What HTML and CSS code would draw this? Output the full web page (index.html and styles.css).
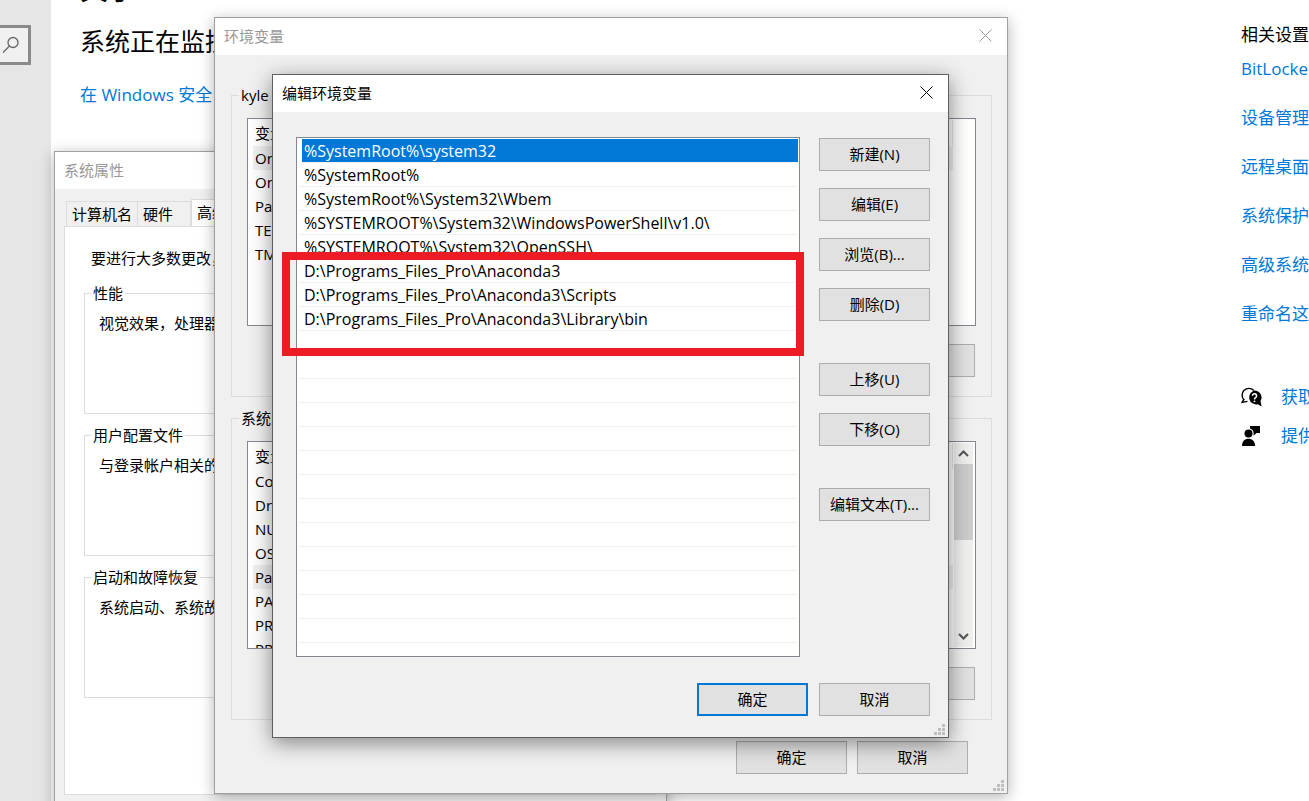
FILE: index.html
```html
<!DOCTYPE html>
<html lang="zh-CN">
<head>
    <meta charset="UTF-8">
    <meta name="viewport" content="width=device-width, initial-scale=1.0">
    <title>关于</title>
    <link rel="stylesheet" href="styles.css">
</head>
<body>
    <div class="desktop">
        <div class="settings">
            <div class="sidebar">
                <label class="search">
                    <input class="search-input" type="text" aria-label="查找设置">
                    <svg class="search-icon" width="18" height="18" viewBox="0 0 18 18" fill="none" stroke="#666" stroke-width="1.3">
                        <circle cx="11" cy="6.5" r="5"/>
                        <path d="M7.5 10 L1 16.5"/>
                    </svg>
                </label>
            </div>
            <main class="about">
                <h1 class="about-title">关于</h1>
                <h2 class="about-status">系统正在监控</h2>
                <a class="link" href="#">在 Windows 安全</a>
            </main>
            <aside class="related">
                <h3 class="related-title">相关设置</h3>
                <nav class="related-links">
                    <a class="link" href="#">BitLocker</a>
                    <a class="link" href="#">设备管理</a>
                    <a class="link" href="#">远程桌面</a>
                    <a class="link" href="#">系统保护</a>
                    <a class="link" href="#">高级系统</a>
                    <a class="link" href="#">重命名这</a>
                </nav>
                <div class="help">
                    <div class="help-row">
                        <svg width="22" height="20" viewBox="0 0 22 20">
                            <path d="M3 13 A6.3 6.3 0 1 1 12.8 3.5" fill="none" stroke="#000" stroke-width="1.4"/>
                            <path d="M3.2 12 L1 15.4 L6.5 14.4" fill="none" stroke="#000" stroke-width="1.4"/>
                            <path d="M13.5 3.5 a7 7 0 0 1 6 10.6 L20.6 19.4 L16.8 17.2 A7 7 0 1 1 13.5 3.5 Z" fill="#000"/>
                            <path d="M11.4 8.7 a2.1 2.1 0 1 1 3.2 1.9 c-.8.5-1.1.8-1.1 1.8" fill="none" stroke="#fff" stroke-width="1.5"/>
                            <rect x="12.7" y="13.6" width="1.6" height="1.6" fill="#fff"/>
                        </svg>
                        <a class="link" href="#">获取</a>
                    </div>
                    <div class="help-row">
                        <svg width="22" height="20" viewBox="0 0 22 20">
                            <circle cx="7.5" cy="7.5" r="4"/>
                            <path d="M1 20 C1 15 4 12.8 7.5 12.8 S14 15 14 20 Z"/>
                            <path d="M9 0 H19 V7 H15.5 L12.6 9.8 V7 Q12.2 3.6 9 2.6 Z"/>
                        </svg>
                        <a class="link" href="#">提供</a>
                    </div>
                </div>
            </aside>
        </div>

        <section class="window window-system">
            <header class="window-head">
                <span class="window-title">系统属性</span>
            </header>
            <div class="system-body">
                <div class="tabs">
                    <button class="tab">计算机名</button>
                    <button class="tab tab-hardware">硬件</button>
                    <button class="tab tab-active">高级</button>
                </div>
                <div class="pane">
                    <p class="pane-note">要进行大多数更改，</p>
                    <fieldset class="option">
                        <legend>性能</legend>
                        视觉效果，处理器
                    </fieldset>
                    <fieldset class="option">
                        <legend>用户配置文件</legend>
                        与登录帐户相关的
                    </fieldset>
                    <fieldset class="option">
                        <legend>启动和故障恢复</legend>
                        系统启动、系统故
                    </fieldset>
                </div>
            </div>
        </section>

        <section class="window window-env">
            <header class="window-head">
                <span class="window-title">环境变量</span>
                <button class="close" aria-label="关闭">
                    <svg width="13" height="13" viewBox="0 0 13 13" stroke="currentColor"><path d="M.5 .5 L12.5 12.5 M12.5 .5 L.5 12.5"/></svg>
                </button>
            </header>
            <div class="env-body">
                <fieldset class="vars">
                    <legend>kyle 的</legend>
                    <div class="vars-box">
                        <table class="vars-table">
                            <tr><th>变量</th><th></th></tr>
                            <tr class="vars-current"><td>OneDrive</td><td></td></tr>
                            <tr><td>OneDrive</td><td></td></tr>
                            <tr><td>Path</td><td></td></tr>
                            <tr><td>TEMP</td><td></td></tr>
                            <tr><td>TMP</td><td></td></tr>
                        </table>
                    </div>
                    <div class="vars-actions">
                        <button class="btn" aria-label="删除"></button>
                    </div>
                </fieldset>
                <fieldset class="vars">
                    <legend>系统变量</legend>
                    <div class="vars-box">
                        <table class="vars-table">
                            <tr><th>变量</th><th></th></tr>
                            <tr><td>ComSpec</td><td></td></tr>
                            <tr><td>DriverData</td><td></td></tr>
                            <tr><td>NUMBER</td><td></td></tr>
                            <tr><td>OS</td><td></td></tr>
                            <tr class="vars-current"><td>Path</td><td></td></tr>
                            <tr><td>PATHEXT</td><td></td></tr>
                            <tr><td>PROCESSOR</td><td></td></tr>
                            <tr><td>PROCESSOR</td><td></td></tr>
                        </table>
                        <div class="scrollbar">
                            <svg class="scroll-arrow" width="19" height="21" viewBox="0 0 19 21" fill="none" stroke="#555" stroke-width="2"><path d="M5 13 L9.5 8.5 L14 13"/></svg>
                            <div class="scroll-thumb"></div>
                            <svg class="scroll-arrow" width="19" height="21" viewBox="0 0 19 21" fill="none" stroke="#555" stroke-width="2"><path d="M5 8 L9.5 12.5 L14 8"/></svg>
                        </div>
                    </div>
                    <div class="vars-actions">
                        <button class="btn" aria-label="删除"></button>
                    </div>
                </fieldset>
                <div class="env-footer">
                    <button class="btn">确定</button>
                    <button class="btn">取消</button>
                </div>
            </div>
            <svg class="grip" width="11" height="11" viewBox="0 0 11 11" fill="#bfbfbf"><path d="M8 0h3v3h-3zM4 4h3v3h-3zM8 4h3v3h-3zM0 8h3v3h-3zM4 8h3v3h-3zM8 8h3v3h-3z"/></svg>
        </section>

        <section class="window window-edit">
            <header class="window-head">
                <span class="window-title">编辑环境变量</span>
                <button class="close" aria-label="关闭">
                    <svg width="13" height="13" viewBox="0 0 13 13" stroke="currentColor"><path d="M.5 .5 L12.5 12.5 M12.5 .5 L.5 12.5"/></svg>
                </button>
            </header>
            <div class="edit-body">
                <div class="edit-main">
                    <ul class="paths">
                        <li class="path path-selected">%SystemRoot%\system32</li>
                        <li class="path">%SystemRoot%</li>
                        <li class="path">%SystemRoot%\System32\Wbem</li>
                        <li class="path">%SYSTEMROOT%\System32\WindowsPowerShell\v1.0\</li>
                        <li class="path">%SYSTEMROOT%\System32\OpenSSH\</li>
                        <li class="path">D:\Programs_Files_Pro\Anaconda3</li>
                        <li class="path">D:\Programs_Files_Pro\Anaconda3\Scripts</li>
                        <li class="path">D:\Programs_Files_Pro\Anaconda3\Library\bin</li>
                        <li class="path"></li>
                        <li class="path"></li>
                        <li class="path"></li>
                        <li class="path"></li>
                        <li class="path"></li>
                        <li class="path"></li>
                        <li class="path"></li>
                        <li class="path"></li>
                        <li class="path"></li>
                        <li class="path"></li>
                        <li class="path"></li>
                        <li class="path"></li>
                        <li class="path"></li>
                    </ul>
                    <div class="edit-actions">
                        <div class="edit-group">
                            <button class="btn">新建(N)</button>
                            <button class="btn">编辑(E)</button>
                            <button class="btn">浏览(B)...</button>
                            <button class="btn">删除(D)</button>
                        </div>
                        <div class="edit-group">
                            <button class="btn">上移(U)</button>
                            <button class="btn">下移(O)</button>
                        </div>
                        <div class="edit-group">
                            <button class="btn">编辑文本(T)...</button>
                        </div>
                    </div>
                </div>
                <div class="edit-footer">
                    <button class="btn btn-default">确定</button>
                    <button class="btn">取消</button>
                </div>
            </div>
            <div class="marker"></div>
            <svg class="grip" width="11" height="11" viewBox="0 0 11 11" fill="#bfbfbf"><path d="M8 0h3v3h-3zM4 4h3v3h-3zM8 4h3v3h-3zM0 8h3v3h-3zM4 8h3v3h-3zM8 8h3v3h-3z"/></svg>
        </section>
    </div>
</body>
</html>
```
FILE: styles.css
```css
* {
    box-sizing: border-box;
}
body {
    margin: 0;
    background: #fff;
    color: #000;
    font-family: "Open Sans", "Noto Sans CJK SC", sans-serif;
    font-size: 15px;
    line-height: 24px;
}
button {
    padding: 0;
    font: inherit;
    color: inherit;
}
.desktop {
    position: relative;
    height: 100vh;
    overflow: hidden;
}

/* settings page */
.settings {
    display: flex;
    height: 100%;
    font-size: 17px;
}
.sidebar {
    width: 51px;
    padding: 25px 20px 0 0;
    background: #e6e6e6;
}
.search {
    display: flex;
    align-items: center;
    justify-content: flex-end;
    height: 40px;
    padding-right: 8px;
    border: 3px solid #8a8a8a;
    border-left: 0;
    background: #f0f0f0;
}
.search-input {
    flex: 1;
    width: 0;
    min-width: 0;
    padding: 0;
    border: 0;
    background: none;
}
.search-icon {
    flex: none;
}
.about {
    flex: 1;
    margin-top: -31px;
    padding-left: 29px;
}
.about-title,
.about-status,
.related-title {
    margin: 0;
    font-weight: 400;
}
.about-title {
    font-size: 28px;
    line-height: 40px;
}
.about-status {
    margin: 15px 0 25px;
    font-size: 25px;
    line-height: 34px;
}
.link {
    color: #0078d7;
    text-decoration: none;
    white-space: nowrap;
}
.related {
    width: 68px;
    padding-top: 23px;
    white-space: nowrap;
}
.related-title {
    font-size: 17px;
}
.related-links {
    display: flex;
    flex-direction: column;
    gap: 25px;
    margin-top: 10px;
}
.help {
    display: flex;
    flex-direction: column;
    gap: 15px;
    margin-top: 59px;
}
.help-row {
    display: flex;
    align-items: center;
    gap: 18px;
}
.help-row svg {
    flex: none;
}

/* windows */
.window {
    position: absolute;
    border: 1px solid #a0a0a0;
    background: #f0f0f0;
    box-shadow: 0 3px 14px rgba(0, 0, 0, .3);
}
.window-head {
    display: flex;
    align-items: center;
    justify-content: space-between;
    height: 37px;
    padding: 0 15px 2px 9px;
    background: #fff;
    color: #999;
}
.close {
    display: flex;
    border: 0;
    background: none;
}
.grip {
    position: absolute;
    right: 3px;
    bottom: 2px;
}
.btn {
    width: 111px;
    height: 33px;
    padding-bottom: 2px;
    border: 1px solid #adadad;
    background: #e1e1e1;
    white-space: nowrap;
}
.btn-default {
    border: 2px solid #0078d7;
}

/* system properties */
.window-system {
    top: 151px;
    left: 54px;
    width: 613px;
}
.system-body {
    padding: 10px 9px 40px;
}
.tabs {
    display: flex;
    align-items: flex-end;
    padding-left: 2px;
}
.tab {
    height: 25px;
    padding: 0 5px 2px;
    border: 1px solid #dcdcdc;
    border-bottom: 0;
    background: #f0f0f0;
}
.tab-hardware {
    width: 53px;
    border-left: 0;
    text-align: left;
}
.tab-active {
    height: 27px;
    border-left: 1px solid #dcdcdc;
    background: #fff;
}
.pane {
    padding: 19px 19px 87px;
    border: 1px solid #dcdcdc;
    background: #fff;
}
.pane-note {
    margin: 0 0 11px 7px;
}
.option {
    height: 133px;
    margin: 0 0 9px;
    padding: 6px 14px;
    border: 1px solid #dcdcdc;
}
.option legend,
.vars legend {
    margin-left: -8px;
    padding: 0 2px;
}

/* environment variables */
.window-env {
    top: 17px;
    left: 214px;
    width: 794px;
}
.env-body {
    padding: 28px 15px 19px 16px;
}
.vars {
    margin: 0 0 9px;
    padding: 11px 15px 19px;
    border: 1px solid #dcdcdc;
}
.vars-box {
    display: flex;
    justify-content: space-between;
    height: 208px;
    padding: 1px 2px 1px 5px;
    border: 1px solid #828790;
    background: #fff;
    overflow: hidden;
}
.vars-table {
    width: 700px;
    height: min-content;
    border-collapse: collapse;
    table-layout: fixed;
}
.vars-table th,
.vars-table td {
    height: 24px;
    padding: 0 2px;
    font-weight: 400;
    text-align: left;
}
.vars-table th {
    height: 26px;
    border-right: 1px solid #e5e5e5;
}
.vars-table th:first-child {
    border-right: 0;
}
.vars-current {
    background: #f0f0f0;
}
.vars-actions {
    display: flex;
    justify-content: flex-end;
    margin-top: 18px;
    padding-right: 1px;
}
.scrollbar {
    display: flex;
    flex-direction: column;
    width: 19px;
    background: #f0f0f0;
}
.scroll-thumb {
    height: 76px;
    margin-bottom: auto;
    background: #cdcdcd;
}
.env-footer {
    display: flex;
    justify-content: flex-end;
    gap: 10px;
    margin-top: 21px;
    padding-right: 24px;
}

/* edit environment variable */
.window-edit {
    top: 74px;
    left: 272px;
    width: 677px;
    border-color: #5f5f5f;
    box-shadow: 0 5px 20px rgba(0, 0, 0, .45);
}
.window-edit .window-head {
    color: #000;
}
.edit-body {
    padding: 25px 18px 21px 23px;
}
.edit-main {
    display: flex;
    gap: 19px;
}
.paths {
    flex: 1;
    height: 520px;
    margin: 0;
    padding: 1px;
    border: 1px solid #828790;
    background: #fff;
    list-style: none;
}
.path {
    height: 24px;
    padding-left: 6px;
    border-bottom: 1px solid #f0f0f0;
    font-size: 16px;
    white-space: nowrap;
}
.path-selected {
    margin-left: 4px;
    padding-left: 2px;
    background: #0078d7;
    background-clip: padding-box;
    color: #fff;
}
.edit-actions {
    display: flex;
    flex-direction: column;
    gap: 42px;
    padding-top: 1px;
}
.edit-group {
    display: flex;
    flex-direction: column;
    gap: 17px;
}
.edit-footer {
    display: flex;
    justify-content: flex-end;
    gap: 11px;
    margin-top: 26px;
}
.marker {
    position: absolute;
    top: 177px;
    left: 9px;
    width: 522px;
    height: 104px;
    border: 8px solid #ed1c24;
}
```
